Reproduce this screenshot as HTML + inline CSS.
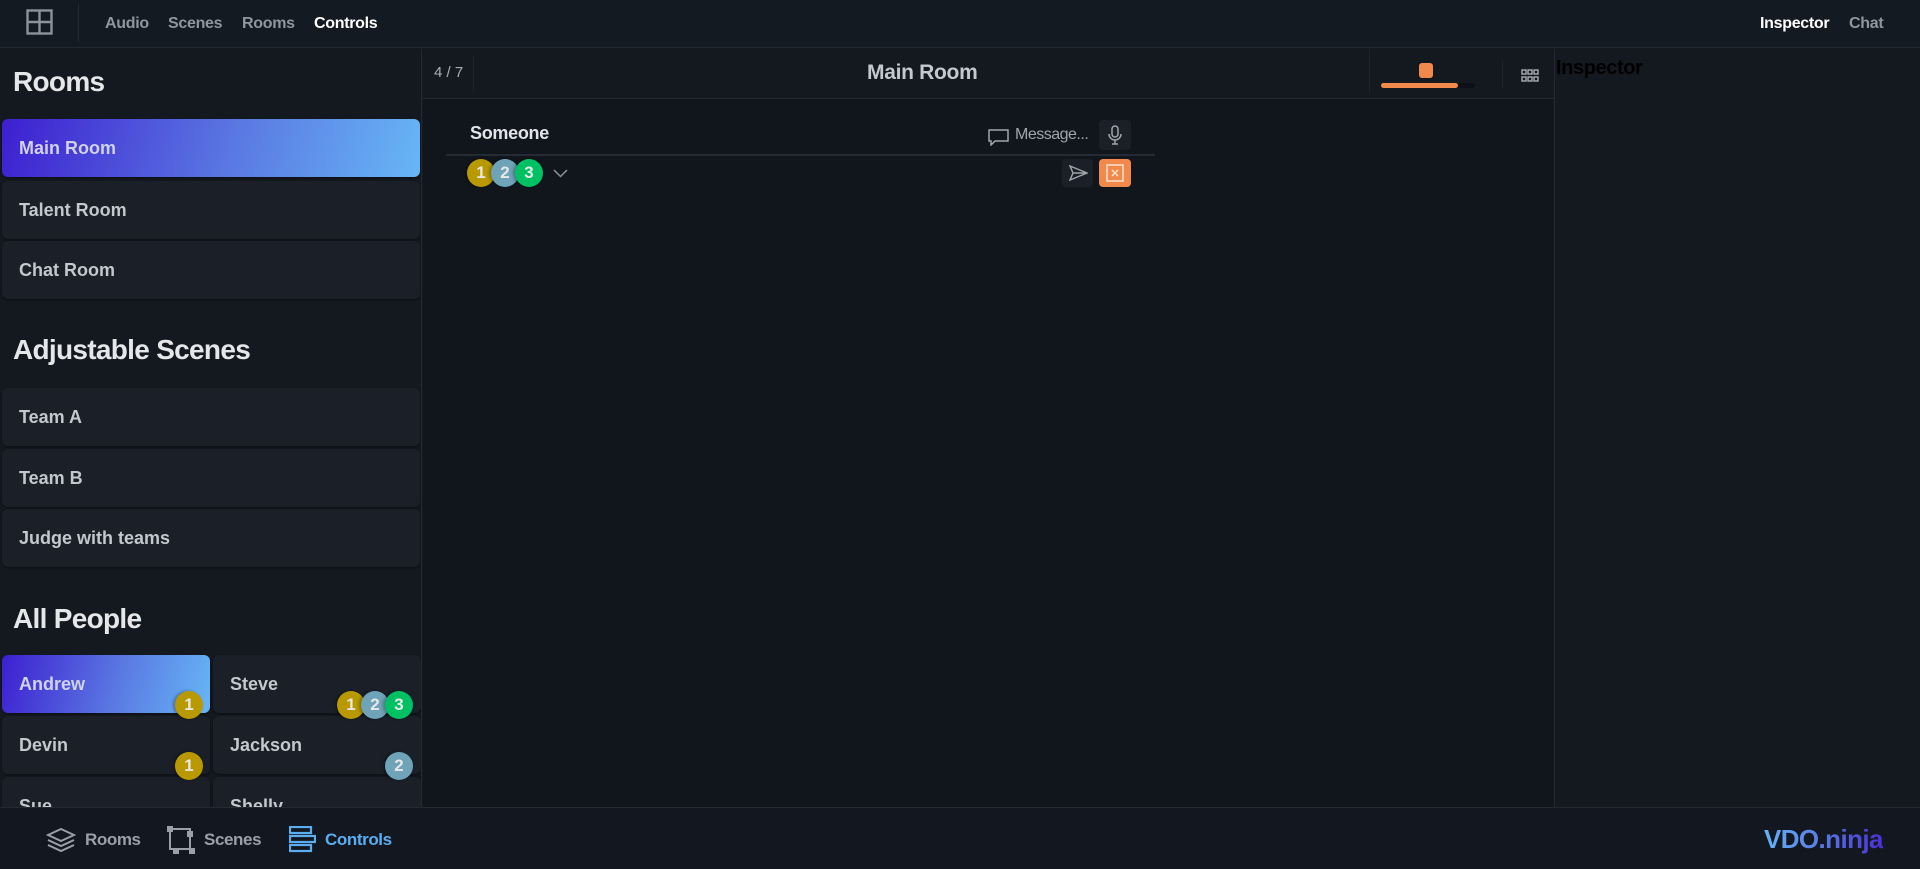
<!DOCTYPE html>
<html><head><meta charset="utf-8"><style>
*{box-sizing:border-box;margin:0;padding:0}
body{width:1920px;height:869px;overflow:hidden;background:#141920;font-family:"Liberation Sans",sans-serif;position:relative;color:#c9ccd1}
.a{position:absolute}
.top{left:0;top:0;width:1920px;height:48px;background:#141a21;border-bottom:1px solid #232a33}
.nav{top:15px;font-size:16px;font-weight:bold;color:#8f969e;letter-spacing:-0.3px}
.side{left:0;top:49px;width:422px;height:758px;background:#141920;border-right:1px solid #232a33;overflow:hidden}
h2{position:absolute;left:13px;font-size:28px;font-weight:bold;color:#e6e7e9;letter-spacing:-0.7px}
.card{position:absolute;left:2px;width:418px;height:58px;background:#1a1f28;border-radius:6px;font-size:18px;font-weight:bold;color:#c4c7cc;padding:19px 0 0 17px;box-shadow:0 1px 2px rgba(0,0,0,.4)}
.sel{background:linear-gradient(105deg,#3d1fd0,#5a78e2 55%,#67b6f6);color:#cfd2e8}
.pc{width:208px}
.b{position:absolute;width:28px;height:28px;border-radius:50%;color:#e8e8e8;font-size:17px;font-weight:bold;text-align:center;line-height:28px;box-shadow:-2px 0 3px rgba(0,0,0,.3)}
.y{background:#b89a00}.bl{background:#6fa3b8}.g{background:#00c064}
.mid{left:423px;top:49px;width:1131px;height:758px;background:#11161d}
.right{left:1554px;top:49px;width:366px;height:758px;background:#141920;border-left:1px solid #232a33}
.bot{left:0;top:807px;width:1920px;height:62px;background:#131820;border-top:1px solid #232a33}
.bt{top:22px;font-size:17px;font-weight:bold;color:#9aa0a7;letter-spacing:-0.4px}
</style></head><body>
<div class="a top">
 <svg class="a" style="left:26px;top:9px" width="27" height="26" viewBox="0 0 27 26"><g fill="none" stroke="#8c939b" stroke-width="2.4"><rect x="1.5" y="1.5" width="24" height="23"/><path d="M13.5 1.5v23M1.5 13h24"/></g></svg>
 <div class="a" style="left:78px;top:4px;width:1px;height:38px;background:#232a33"></div>
 <div class="a nav" style="left:105px">Audio</div>
 <div class="a nav" style="left:168px">Scenes</div>
 <div class="a nav" style="left:242px">Rooms</div>
 <div class="a nav" style="left:314px;color:#fff">Controls</div>
 <div class="a nav" style="left:1760px;color:#fff">Inspector</div>
 <div class="a nav" style="left:1849px">Chat</div>
</div>
<div class="a side">
 <h2 style="top:17px">Rooms</h2>
 <div class="card sel" style="top:70px">Main Room</div>
 <div class="card" style="top:132px">Talent Room</div>
 <div class="card" style="top:192px">Chat Room</div>
 <h2 style="top:285px">Adjustable Scenes</h2>
 <div class="card" style="top:339px">Team A</div>
 <div class="card" style="top:400px">Team B</div>
 <div class="card" style="top:460px">Judge with teams</div>
 <h2 style="top:554px">All People</h2>
 <div class="card pc sel" style="top:606px">Andrew</div>
 <div class="card pc" style="top:606px;left:213px">Steve</div>
 <div class="card pc" style="top:667px">Devin</div>
 <div class="card pc" style="top:667px;left:213px">Jackson</div>
 <div class="card pc" style="top:728px">Sue</div>
 <div class="card pc" style="top:728px;left:213px">Shelly</div>
 <div class="b y" style="left:175px;top:642px">1</div>
 <div class="b y" style="left:337px;top:642px">1</div>
 <div class="b bl" style="left:361px;top:642px">2</div>
 <div class="b g" style="left:385px;top:642px">3</div>
 <div class="b y" style="left:175px;top:703px">1</div>
 <div class="b bl" style="left:385px;top:703px">2</div>
</div>
<div class="a mid">
 <div class="a" style="left:0;top:0;width:1131px;height:50px;background:#141920;border-bottom:1px solid #232a33"></div>
 <div class="a" style="left:11px;top:15px;font-size:15px;color:#a9aeb4">4 / 7</div>
 <div class="a" style="left:50px;top:6px;width:1px;height:36px;background:#1f252e"></div>
 <div class="a" style="left:444px;top:12px;font-size:21px;font-weight:bold;color:#c5c8cc;letter-spacing:-0.3px">Main Room</div>
 <div class="a" style="left:946px;top:0;width:1px;height:44px;background:#1f252e"></div>
 <div class="a" style="left:958px;top:34px;width:94px;height:5px;background:#0d1117;border-radius:3px"></div>
 <div class="a" style="left:958px;top:34px;width:77px;height:5px;background:#f0894a;border-radius:3px"></div>
 <div class="a" style="left:996px;top:14px;width:14px;height:15px;background:#f0894a;border-radius:3px"></div>
 <div class="a" style="left:1079px;top:11px;width:1px;height:28px;background:#1f252e"></div>
 <svg class="a" style="left:1098px;top:20px" width="18" height="13" viewBox="0 0 18 13"><g fill="none" stroke="#a9aeb4" stroke-width="1.4"><rect x="1" y="1" width="4" height="4"/><rect x="7" y="1" width="4" height="4"/><rect x="13" y="1" width="4" height="4"/><rect x="1" y="8" width="4" height="4"/><rect x="7" y="8" width="4" height="4"/><rect x="13" y="8" width="4" height="4"/></g></svg>
 <div class="a" style="left:47px;top:74px;font-size:18px;font-weight:bold;color:#e2e4e7;letter-spacing:-0.3px">Someone</div>
 <svg class="a" style="left:565px;top:80px" width="21" height="17" viewBox="0 0 21 17"><path d="M1 1h19v11H7l-4 4v-4H1z" fill="none" stroke="#a0a5ab" stroke-width="1.5"/></svg>
 <div class="a" style="left:592px;top:77px;font-size:16px;color:#a0a5ab;letter-spacing:-0.5px">Message...</div>
 <div class="a" style="left:676px;top:71px;width:32px;height:30px;background:#1b2028;border-radius:4px"></div>
 <svg class="a" style="left:684px;top:76px" width="16" height="20" viewBox="0 0 16 20"><g fill="none" stroke="#a0a5ab" stroke-width="1.5"><rect x="5" y="1" width="6" height="11" rx="3"/><path d="M2 9a6 6 0 0 0 12 0M8 15v4M5 19h6"/></g></svg>
 <div class="a" style="left:23px;top:105px;width:709px;height:2px;background:#252b34"></div>
 <div class="b y" style="left:44px;top:110px">1</div>
 <div class="b bl" style="left:68px;top:110px">2</div>
 <div class="b g" style="left:92px;top:110px">3</div>
 <svg class="a" style="left:130px;top:120px" width="15" height="9" viewBox="0 0 15 9"><path d="M1 1l6.5 6.5L14 1" fill="none" stroke="#8c939b" stroke-width="1.5"/></svg>
 <div class="a" style="left:639px;top:110px;width:31px;height:28px;background:#1b2028;border-radius:4px"></div>
 <svg class="a" style="left:646px;top:116px" width="19" height="16" viewBox="0 0 19 16"><path d="M1 1l17 7-17 7 3-7z M4 8h14" fill="none" stroke="#a0a5ab" stroke-width="1.4"/></svg>
 <div class="a" style="left:676px;top:110px;width:32px;height:28px;background:#f0894a;border-radius:4px"></div>
 <svg class="a" style="left:683px;top:115px" width="18" height="18" viewBox="0 0 18 18"><g fill="none" stroke="#fbe3d2" stroke-width="1.5"><rect x="1" y="1" width="16" height="16"/><path d="M6 6l6 6M12 6l-6 6"/></g></svg>
</div>
<div class="a right"><div class="a" style="left:1px;top:8px;font-size:20px;font-weight:bold;color:#000;letter-spacing:-0.4px">Inspector</div></div>
<div class="a bot">
 <svg class="a" style="left:46px;top:20px" width="30" height="25" viewBox="0 0 30 25"><g fill="none" stroke="#9aa0a7" stroke-width="2"><path d="M15 1l13 6-13 6-13-6z"/><path d="M2 12l13 6 13-6"/><path d="M2 17l13 6 13-6"/></g></svg>
 <div class="a bt" style="left:85px">Rooms</div>
 <svg class="a" style="left:167px;top:18px" width="28" height="28" viewBox="0 0 28 28"><g fill="none" stroke="#9aa0a7" stroke-width="2"><rect x="3" y="3" width="20" height="20"/></g><g fill="#9aa0a7"><rect x="0" y="0" width="6" height="6"/><rect x="20" y="5" width="6" height="6"/><rect x="6" y="22" width="6" height="6"/><rect x="22" y="22" width="6" height="6"/></g></svg>
 <div class="a bt" style="left:204px">Scenes</div>
 <svg class="a" style="left:289px;top:18px" width="27" height="27" viewBox="0 0 27 27"><g fill="none" stroke="#5aaef0" stroke-width="2.2"><rect x="1" y="1" width="21" height="6"/><rect x="1" y="10" width="25" height="6"/><rect x="1" y="19" width="21" height="6"/></g></svg>
 <div class="a bt" style="left:325px;color:#5aaef0">Controls</div>
 <div class="a" style="left:1764px;top:16px;font-size:26px;font-weight:bold;letter-spacing:-0.6px;background:linear-gradient(90deg,#63b3f5,#5a7ee6 45%,#4a2fd6);-webkit-background-clip:text;background-clip:text;color:transparent">VDO.ninja</div>
</div>
</body></html>
